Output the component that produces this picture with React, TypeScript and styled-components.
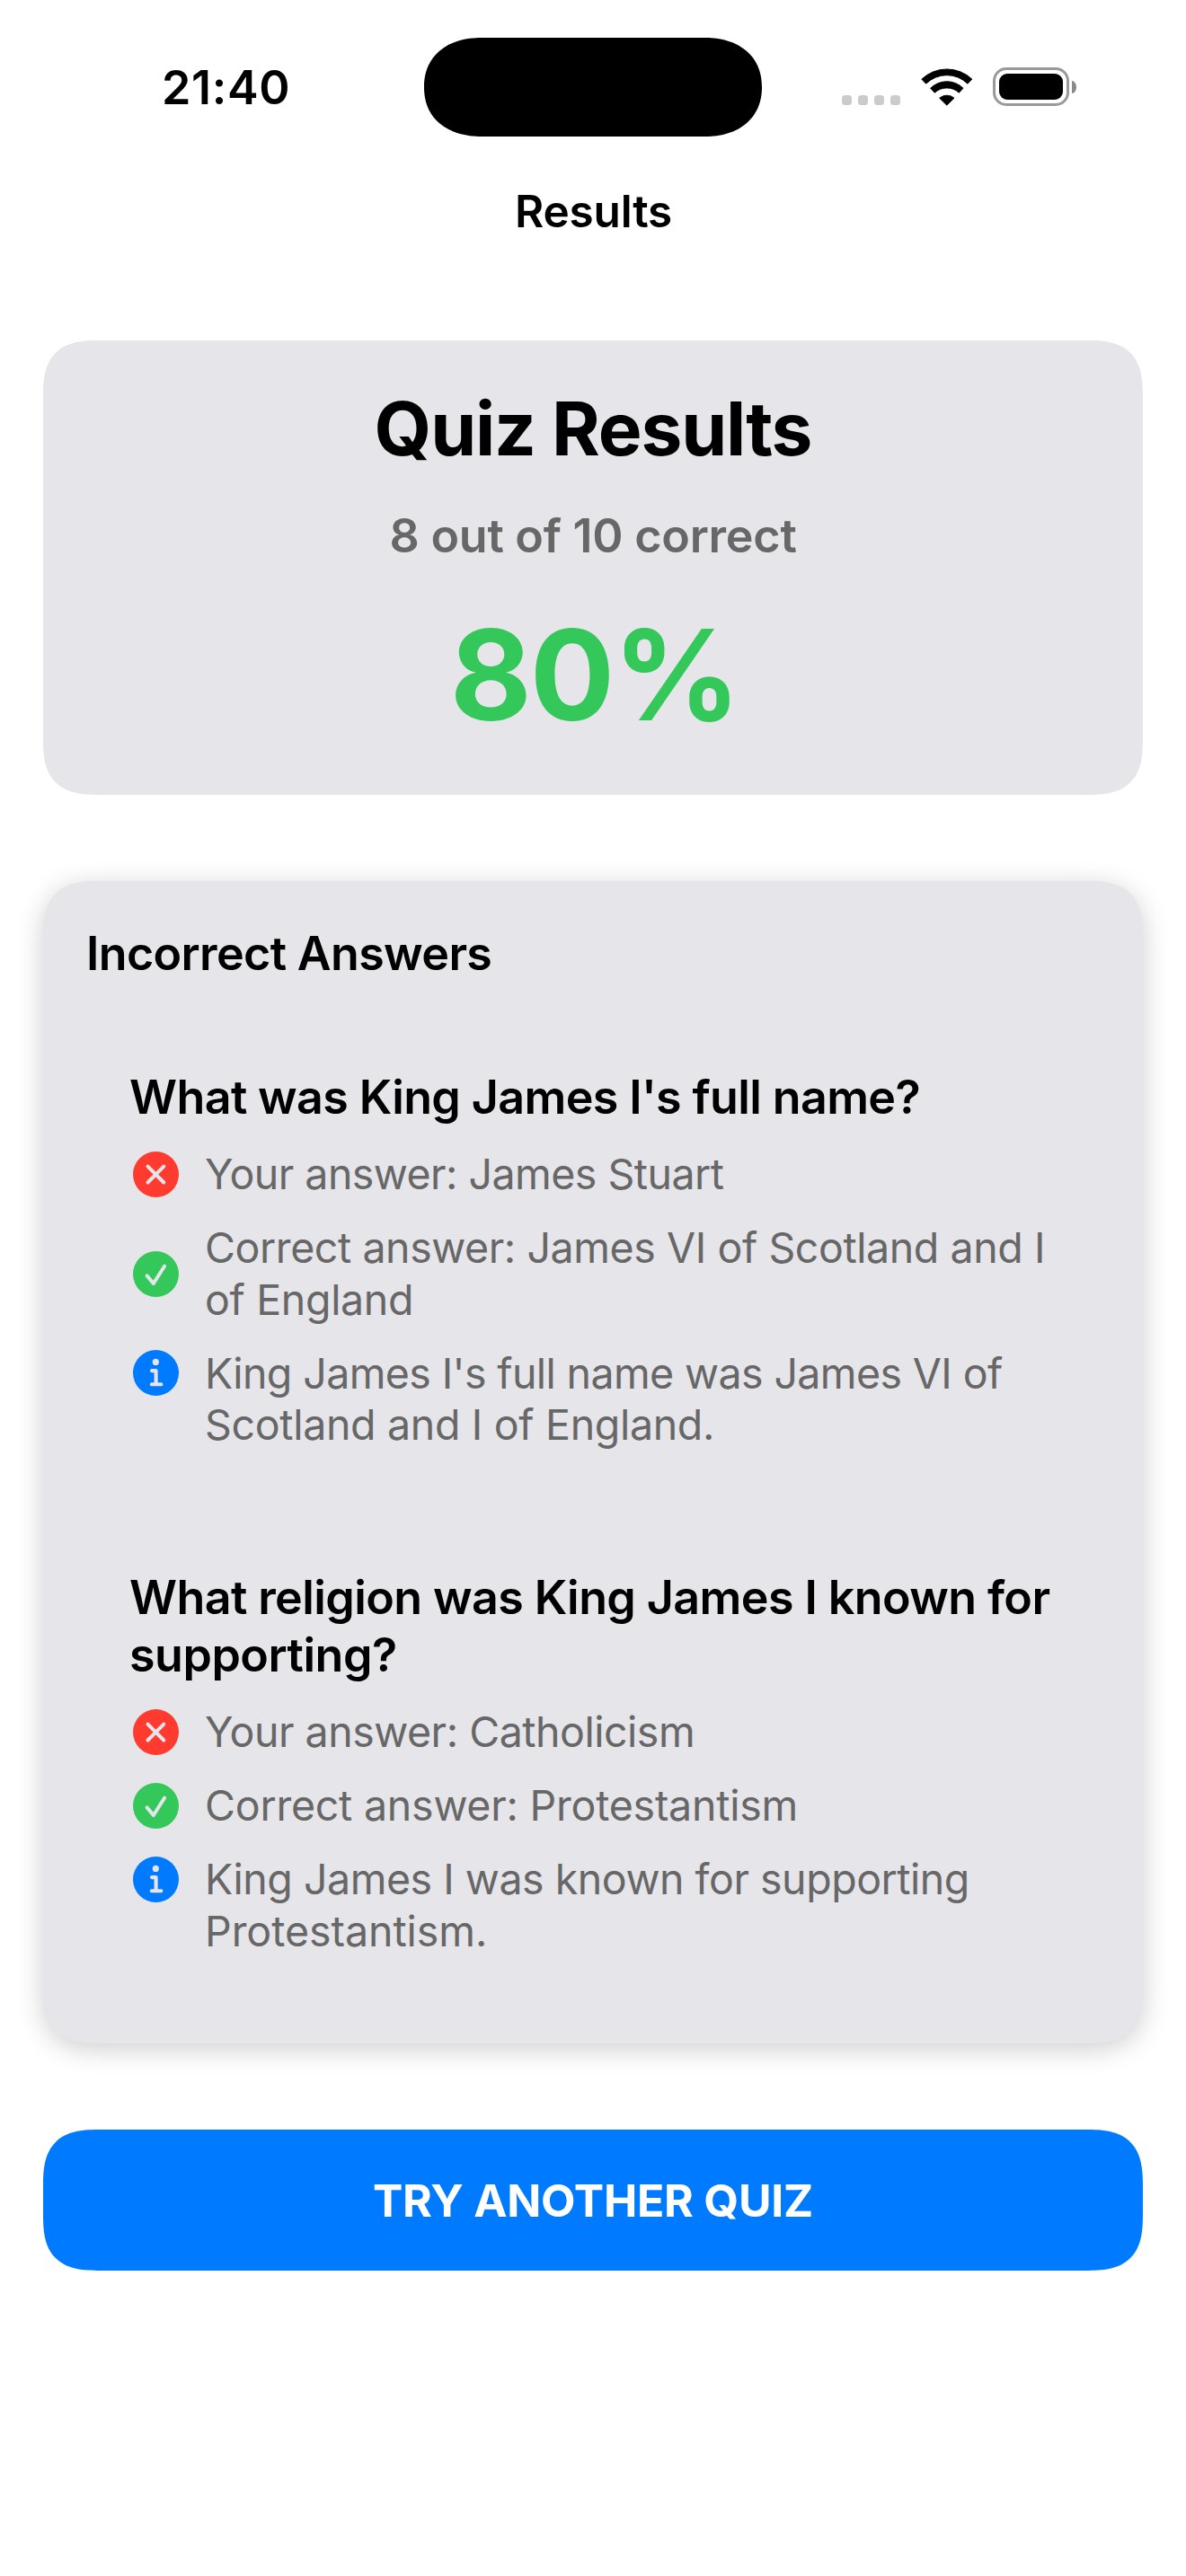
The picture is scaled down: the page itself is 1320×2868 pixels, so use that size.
import React from "react";
import styled, { createGlobalStyle } from "styled-components";

const colors = {
  card: "#e5e5ea",
  text: "#000000",
  secondary: "#676767",
  green: "#34c759",
  red: "#ff3b30",
  blue: "#007aff",
};

const GlobalStyle = createGlobalStyle`
  *, *::before, *::after { box-sizing: border-box; }
  body {
    margin: 0;
    background: #ffffff;
    color: ${colors.text};
    font-family: Inter, "Liberation Sans", sans-serif;
  }
`;

const Screen = styled.div`
  display: flex;
  flex-direction: column;
  width: 1320px;
  min-height: 2868px;
  background: #ffffff;
`;

/* ---------- Status bar ---------- */

const StatusBar = styled.header`
  display: grid;
  grid-template-columns: 472px 376px 472px;
  align-items: center;
  height: 194px;
`;

const Clock = styled.time`
  padding: 2px 0 0 180px;
  font-size: 52px;
  font-weight: 600;
  line-height: 62px;
  letter-spacing: 0.68px;
`;

const Island = styled.div`
  height: 110px;
  border-radius: 55px;
  background: #000000;

  @supports (corner-shape: superellipse(1.15)) {
    border-radius: 64px / 55px;
    corner-shape: superellipse(1.15);
  }
`;

const StatusIcons = styled.div`
  display: flex;
  align-items: center;
  padding-left: 89px;
`;

const Signal = styled.div`
  display: flex;
  gap: 7px;
  margin: 29px 23px 0 0;
`;

const SignalDot = styled.span`
  width: 11px;
  height: 11px;
  border-radius: 3.5px;
  background: #cbcbcb;
`;

const WifiIcon = styled.svg`
  width: 58px;
  height: 43px;
  margin: 0 22px 2px 0;
  fill: #000000;
`;

const BatteryBody = styled.div`
  width: 85px;
  height: 43px;
  margin-bottom: 1px;
  padding: 4px;
  border: 3px solid #999999;
  border-radius: 15px;
`;

const BatteryLevel = styled.div`
  height: 100%;
  border-radius: 9px;
  background: #000000;
`;

const BatteryCap = styled.div`
  width: 5px;
  height: 14px;
  margin: 0 0 1px 3px;
  border-radius: 0 5px 5px 0 / 0 7px 7px 0;
  background: #8a8a8a;
`;

/* ---------- Page ---------- */

const NavTitle = styled.h1`
  margin: 0;
  height: 82px;
  padding-left: 1px;
  font-size: 49.5px;
  font-weight: 600;
  line-height: 82px;
  letter-spacing: -0.2px;
  text-align: center;
`;

const Content = styled.main`
  display: flex;
  flex-direction: column;
  padding: 103px 48px 0;
`;

const Card = styled.section<{ $raised?: boolean }>`
  display: flex;
  flex-direction: column;
  padding: 48px;
  border-radius: 48px;
  background: ${colors.card};
  box-shadow: ${(p) => (p.$raised ? "0 6px 30px rgba(0, 0, 0, 0.2)" : "none")};

  @supports (corner-shape: superellipse(1.5)) {
    border-radius: 64px;
    corner-shape: superellipse(1.5);
  }
`;

const SummaryCard = styled(Card)`
  align-items: center;
  gap: 36px;
  height: 506px;
`;

const SummaryTitle = styled.h2`
  margin: 0;
  font-size: 82px;
  font-weight: 700;
  line-height: 101px;
  letter-spacing: -1.17px;
`;

const SummaryCount = styled.p`
  margin: 0;
  color: ${colors.secondary};
  font-size: 52px;
  font-weight: 580;
  line-height: 65px;
  letter-spacing: -0.25px;
`;

const Score = styled.p`
  margin: 0;
  padding-left: 3px;
  color: ${colors.green};
  font-size: 140px;
  font-weight: 700;
  line-height: 172px;
  letter-spacing: -2px;
`;

const AnswersCard = styled(Card)`
  margin-top: 96px;
  height: 1294px;
`;

const AnswersTitle = styled.h2`
  margin: 0 0 48px;
  font-size: 52px;
  font-weight: 600;
  line-height: 65px;
  letter-spacing: -0.65px;
`;

const AnswerList = styled.div`
  display: flex;
  flex-direction: column;
  gap: 35px;
`;

const AnswerItem = styled.article`
  display: flex;
  flex-direction: column;
  padding: 48px;
`;

const Question = styled.h3`
  margin: 0 0 24.5px;
  font-size: 52px;
  font-weight: 600;
  line-height: 64.5px;
`;

const Notes = styled.div`
  display: flex;
  flex-direction: column;
  gap: 24.5px;
`;

const Note = styled.div<{ $top?: boolean }>`
  display: flex;
  align-items: ${(p) => (p.$top ? "flex-start" : "center")};
  gap: 29px;
  padding-left: 4px;
`;

const NoteText = styled.p`
  margin: 0;
  color: ${colors.secondary};
  font-size: 46.5px;
  font-weight: 400;
  line-height: 57.5px;
`;

const Line = styled.span<{ $tracking: number }>`
  display: block;
  white-space: nowrap;
  letter-spacing: ${(p) => p.$tracking}px;
`;

const Badge = styled.svg<{ $top?: boolean }>`
  flex: none;
  width: 51px;
  height: 51px;
  margin-top: ${(p) => (p.$top ? "2.5px" : "0")};
  fill: none;
  stroke: ${colors.card};
  stroke-linecap: round;
  stroke-linejoin: round;
`;

const RetryButton = styled.button`
  height: 157px;
  margin: 96px 0 0;
  padding: 0;
  border: 0;
  border-radius: 48px;
  background: ${colors.blue};
  color: #ffffff;
  font: inherit;
  font-size: 50px;
  font-weight: 650;
  line-height: 62px;
  letter-spacing: -0.25px;

  @supports (corner-shape: superellipse(1.5)) {
    border-radius: 64px;
    corner-shape: superellipse(1.5);
  }
`;

/* ---------- Data ---------- */

type Kind = "wrong" | "right" | "info";
type TextLine = [text: string, tracking: number];

interface Entry {
  question: TextLine[];
  notes: { kind: Kind; lines: TextLine[] }[];
}

const entries: Entry[] = [
  {
    question: [["What was King James I's full name?", -0.62]],
    notes: [
      { kind: "wrong", lines: [["Your answer: James Stuart", -0.53]] },
      {
        kind: "right",
        lines: [
          ["Correct answer: James VI of Scotland and I", -0.42],
          ["of England", -0.33],
        ],
      },
      {
        kind: "info",
        lines: [
          ["King James I's full name was James VI of", -0.61],
          ["Scotland and I of England.", -0.32],
        ],
      },
    ],
  },
  {
    question: [
      ["What religion was King James I known for", -0.6],
      ["supporting?", -0.49],
    ],
    notes: [
      { kind: "wrong", lines: [["Your answer: Catholicism", -0.48]] },
      { kind: "right", lines: [["Correct answer: Protestantism", -0.23]] },
      {
        kind: "info",
        lines: [
          ["King James I was known for supporting", -0.47],
          ["Protestantism.", -0.04],
        ],
      },
    ],
  },
];

/* ---------- Parts ---------- */

function KindBadge({ kind }: { kind: Kind }) {
  const fill = { wrong: colors.red, right: colors.green, info: colors.blue }[kind];
  return (
    <Badge viewBox="0 0 51 51" $top={kind === "info"} aria-hidden="true">
      <circle cx="25.5" cy="25.5" r="25.5" fill={fill} stroke="none" />
      {kind === "wrong" && <path d="M16.5 16.7 34.3 34.5M34.3 16.7 16.5 34.5" strokeWidth="4" />}
      {kind === "right" && <path d="M15.6 27.4 22.8 36 35.1 16.7" strokeWidth="4" />}
      {kind === "info" && (
        <>
          <circle cx="25.3" cy="13.4" r="3.6" fill={colors.card} stroke="none" />
          <path d="M21 23.1H25.6V38.3M20.8 38.3H31.4" strokeWidth="4.1" />
        </>
      )}
    </Badge>
  );
}

function Lines({ lines }: { lines: TextLine[] }) {
  return (
    <>
      {lines.map(([text, tracking]) => (
        <Line key={text} $tracking={tracking}>
          {text}
        </Line>
      ))}
    </>
  );
}

export default function App() {
  return (
    <Screen>
      <GlobalStyle />
      <StatusBar>
        <Clock>21:40</Clock>
        <Island />
        <StatusIcons>
          <Signal>
            <SignalDot />
            <SignalDot />
            <SignalDot />
            <SignalDot />
          </Signal>
          <WifiIcon viewBox="374 104 174 129" aria-hidden="true">
            <g stroke="#000000" strokeWidth="3" strokeLinejoin="round">
              <path d="M376.5 143.5A122 122 0 0 1 544.5 143.5L530 158.5A99 99 0 0 0 391 158.5Z" />
              <path d="M406 173.5A78 78 0 0 1 515 173.5L501 188.5A60 60 0 0 0 420 188.5Z" />
              <path d="M436 206.5A38 38 0 0 1 485 206.5L460.5 230.5Z" />
            </g>
          </WifiIcon>
          <BatteryBody>
            <BatteryLevel />
          </BatteryBody>
          <BatteryCap />
        </StatusIcons>
      </StatusBar>
      <NavTitle>Results</NavTitle>
      <Content>
        <SummaryCard>
          <SummaryTitle>Quiz Results</SummaryTitle>
          <SummaryCount>8 out of 10 correct</SummaryCount>
          <Score>80%</Score>
        </SummaryCard>
        <AnswersCard $raised>
          <AnswersTitle>Incorrect Answers</AnswersTitle>
          <AnswerList>
            {entries.map((entry) => (
              <AnswerItem key={entry.question[0][0]}>
                <Question>
                  <Lines lines={entry.question} />
                </Question>
                <Notes>
                  {entry.notes.map((note) => (
                    <Note key={note.kind} $top={note.kind === "info"}>
                      <KindBadge kind={note.kind} />
                      <NoteText>
                        <Lines lines={note.lines} />
                      </NoteText>
                    </Note>
                  ))}
                </Notes>
              </AnswerItem>
            ))}
          </AnswerList>
        </AnswersCard>
        <RetryButton type="button">TRY ANOTHER QUIZ</RetryButton>
      </Content>
    </Screen>
  );
}
